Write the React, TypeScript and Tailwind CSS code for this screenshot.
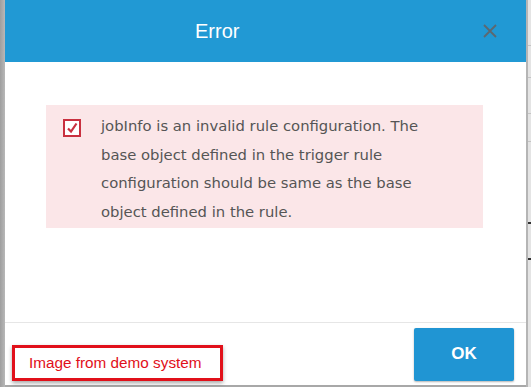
export default function App() {
  return (
    <div
      className="flex h-[387px] w-[531px] overflow-hidden bg-white"
      style={{ fontFamily: '"Liberation Sans", Arial, sans-serif' }}
    >
      {/* page behind the dialog */}
      <div className="w-[5px] shrink-0 bg-gradient-to-r from-[#9e9e9e] to-[#b8b8b8]" />

      <div className="flex w-[521px] shrink-0 flex-col bg-white">
        <div className="flex h-[62px] shrink-0 items-center bg-[#2199d4]">
          <span className="ml-[190px] text-[20px] text-white">Error</span>
          <button className="ml-auto mr-[29px] flex h-[14px] w-[14px] items-center justify-center">
            <svg width="14" height="14" viewBox="0 0 14 14">
              <path d="M1 1L13 13M13 1L1 13" stroke="#5d6870" strokeWidth="1.8" />
            </svg>
          </button>
        </div>

        <div className="h-[260px] shrink-0 pl-[41px] pt-[43px]">
          <div className="flex h-[123px] w-[437px] bg-[#fbe6e8]">
            <div className="ml-[17px] mt-[14px] h-[18px] w-[18px] shrink-0 border-2 border-[#c9303f] bg-white">
              <svg width="14" height="14" viewBox="0 0 14 14">
                <path d="M3 7.5L6 10.5L11.5 2.5" fill="none" stroke="#c9303f" strokeWidth="2.2" />
              </svg>
            </div>
            <p
              className="ml-[20px] mt-[7px] w-[340px] text-[14.8px] leading-[28.5px] text-[#555]"
              style={{ fontFamily: '"DejaVu Sans", Verdana, sans-serif' }}
            >
              jobInfo is an invalid rule configuration. The base object defined in the trigger rule
              configuration should be same as the base object defined in the rule.
            </p>
          </div>
        </div>

        <div className="flex flex-1 items-center border-t border-[#e6e6e6] border-b-2 border-b-[#a8a8a8]">
          <div className="ml-[7px] mt-[18px] flex h-[36px] w-[211px] items-center border-[3px] border-[#e1101a] pl-[14px] shadow-[0_2px_4px_rgba(0,0,0,0.35)]">
            <span className="text-[15.3px] text-[#e1101a]">Image from demo system</span>
          </div>
          <button className="ml-auto mr-[12px] h-[53px] w-[100px] rounded-[2px] bg-[#2095d3] text-[17px] font-bold text-white shadow-[0_1px_2px_rgba(0,0,0,0.3)]">
            OK
          </button>
        </div>
      </div>

      <div className="flex w-[5px] shrink-0 flex-col border-l-2 border-[#b5b5b5] bg-[#e4e4e4]">
        <div className="h-[46px] border-b border-[#c4c4c4]" />
        <div className="h-[32px] border-b border-[#c4c4c4]" />
        <div className="h-[36px] border-b border-[#c4c4c4]" />
        <div className="h-[28px] border-b border-[#c4c4c4]" />
        <div className="h-[82px] border-b-2 border-[#333]" />
        <div className="h-[36px] border-b-2 border-[#333]" />
        <div className="flex-1" />
      </div>
    </div>
  )
}
